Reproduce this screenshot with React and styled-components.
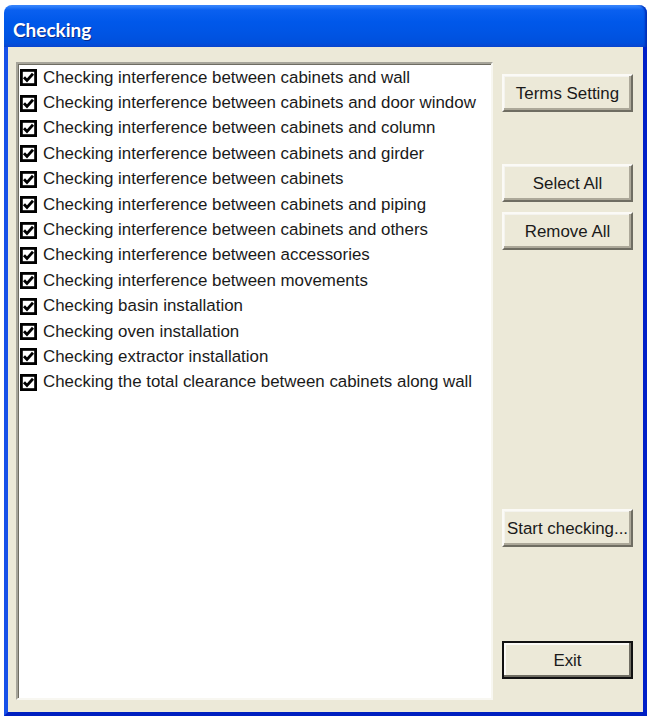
import styled, { createGlobalStyle } from 'styled-components';

const GlobalStyle = createGlobalStyle`
  body {
    margin: 0;
    background: #ffffff;
  }
`;

const items = [
  'Checking interference between cabinets and wall',
  'Checking interference between cabinets and door window',
  'Checking interference between cabinets and column',
  'Checking interference between cabinets and girder',
  'Checking interference between cabinets',
  'Checking interference between cabinets and piping',
  'Checking interference between cabinets and others',
  'Checking interference between accessories',
  'Checking interference between movements',
  'Checking basin installation',
  'Checking oven installation',
  'Checking extractor installation',
  'Checking the total clearance between cabinets along wall',
];

const Window = styled.div`
  margin: 5px 0 0 4px;
  width: 643px;
  height: 711px;
  display: flex;
  flex-direction: column;
`;

const TitleBar = styled.div`
  height: 42px;
  flex-shrink: 0;
  box-sizing: border-box;
  border-radius: 8px 8px 0 0;
  background: linear-gradient(
    180deg,
    #3d8bff 0%,
    #0a60f0 12%,
    #0058ea 40%,
    #0054e3 70%,
    #0050dd 90%,
    #0a46cf 100%
  );
  box-shadow: inset -3px 0 2px -1px #0030b8;
  display: flex;
  align-items: center;
  padding: 6px 0 0 9px;
`;

const Title = styled.div`
  font-family: Lato, "Liberation Sans", sans-serif;
  font-size: 19px;
  font-weight: bold;
  color: #ffffff;
  text-shadow: 1px 1px 0 #0a2a8a;
`;

const Client = styled.div`
  flex: 1;
  display: flex;
  gap: 9px;
  background: #ece9d8;
  border: 4px solid #0831d9;
  border-top: none;
  border-left-color: #1650e8;
  border-right-color: #0020c8;
  border-bottom-color: #0020c0;
  padding: 15px 10px 12px 8px;
`;

const ListBox = styled.div`
  width: 477px;
  box-sizing: border-box;
  background: #ffffff;
  border-style: solid;
  border-width: 2px;
  border-color: #a6a49a #f8f7f1 #f8f7f1 #a6a49a;
  box-shadow: inset 1px 1px 0 #6f6d62;
  padding-top: 1px;
`;

const Row = styled.div`
  height: 25.4px;
  display: flex;
  align-items: center;
  padding-left: 2px;
  gap: 6px;
  font-family: "Liberation Sans", Arial, sans-serif;
  font-size: 16.9px;
  color: #1a1a1a;
  white-space: nowrap;
`;

const Box = styled.svg`
  flex-shrink: 0;
  width: 17px;
  height: 17px;
`;

const Check = () => (
  <Box viewBox="0 0 17 17">
    <rect x="1.4" y="1.4" width="14.2" height="14.2" fill="#fff" stroke="#000" strokeWidth="2.8" />
    <path d="M4 8.2 L7 11.4 L13 4.8" fill="none" stroke="#000" strokeWidth="2.8" />
  </Box>
);

const Side = styled.div`
  display: flex;
  flex-direction: column;
  padding-top: 12px;
`;

const Button = styled.button`
  width: 131px;
  height: 38px;
  margin-top: ${({ $gap }) => $gap || 0}px;
  box-sizing: border-box;
  padding: 2px 0 0;
  background: #ece9d8;
  font-family: "Liberation Sans", Arial, sans-serif;
  font-size: 16.9px;
  color: #1a1a1a;
  border-style: solid;
  border-width: 2px;
  border-color: ${({ $primary }) =>
    $primary ? '#111 #111 #111 #111' : '#fbfaf6 #6f6d62 #6f6d62 #fbfaf6'};
  box-shadow: ${({ $primary }) =>
    $primary
      ? 'inset -2px -2px 0 #6f6d62, inset 2px 2px 0 #fbfaf6'
      : 'inset -2px -2px 0 #aca899, inset 1px 1px 0 #f4f3ee'};
  cursor: default;
`;

const App = () => (
  <>
    <GlobalStyle />
    <Window>
      <TitleBar>
        <Title>Checking</Title>
      </TitleBar>
      <Client>
        <ListBox>
          {items.map((label) => (
            <Row key={label}>
              <Check />
              {label}
            </Row>
          ))}
        </ListBox>
        <Side>
          <Button>Terms Setting</Button>
          <Button $gap={52}>Select All</Button>
          <Button $gap={10}>Remove All</Button>
          <Button $gap={259}>Start checking...</Button>
          <Button $gap={94} $primary>Exit</Button>
        </Side>
      </Client>
    </Window>
  </>
);

export default App;
